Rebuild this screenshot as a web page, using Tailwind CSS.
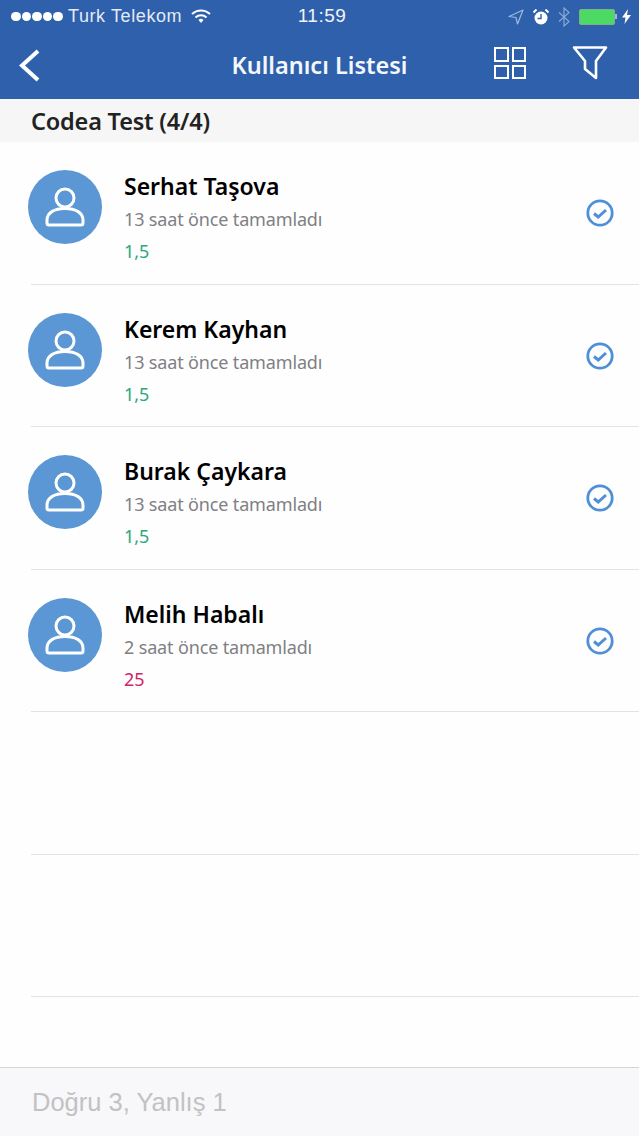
<!DOCTYPE html>
<html>
<head>
    <title>Kullanıcı Listesi</title>
    <script src="https://cdn.jsdelivr.net/npm/@tailwindcss/browser@4"></script>
</head>
<body class="bg-white">
<div class="w-[639px] h-[1136px] flex flex-col overflow-hidden font-['Noto_Sans',sans-serif]">
    <!-- status bar + nav -->
    <header class="h-[99px] bg-[#2f60ab] text-white shrink-0 flex flex-col">
        <div class="h-[33px] flex items-center justify-between pl-[11px] pr-[8px] font-['Liberation_Sans',sans-serif]">
            <div class="flex items-center w-[260px]">
                <div class="flex gap-[1px]">
                    <span class="w-[9.6px] h-[9.6px] rounded-full bg-white"></span>
                    <span class="w-[9.6px] h-[9.6px] rounded-full bg-white"></span>
                    <span class="w-[9.6px] h-[9.6px] rounded-full bg-white"></span>
                    <span class="w-[9.6px] h-[9.6px] rounded-full bg-white"></span>
                    <span class="w-[9.6px] h-[9.6px] rounded-full bg-white"></span>
                </div>
                <span class="ml-[5px] text-[18px] tracking-[0.6px] text-[#e4ebf5]">Turk Telekom</span>
                <svg class="ml-[9px]" width="20" height="15" viewBox="0 0 20 15" fill="none" stroke="white" stroke-width="2">
                    <path d="M1 5 A13 13 0 0 1 19 5"/>
                    <path d="M4.5 8.5 A8 8 0 0 1 15.5 8.5"/>
                    <path d="M10 14 L7.5 11 A3.6 3.6 0 0 1 12.5 11 Z" fill="white" stroke="none"/>
                </svg>
            </div>
            <span class="text-[19px] tracking-[0.5px] text-[#f1f4f9] ml-[2px]">11:59</span>
            <div class="flex items-center w-[260px] justify-end">
                <svg width="16" height="16" viewBox="0 0 16 16" fill="none" stroke="#9fb8dd" stroke-width="1.2" stroke-linejoin="round"><path d="M15 1 L1 7.5 L8 8.5 L9.5 15 Z"/></svg>
                <svg class="ml-[9px]" width="16" height="16" viewBox="0 0 16 16"><circle cx="8" cy="9" r="6.5" fill="white"/><path d="M8 5 V9.5 H4.5" fill="none" stroke="#2f60ab" stroke-width="1.4"/><path d="M0.5 3.5 L3.5 0.5 M15.5 3.5 L12.5 0.5" stroke="white" stroke-width="2"/></svg>
                <svg class="ml-[9px]" width="12" height="20" viewBox="0 0 12 20" fill="none" stroke="#8aa8d4" stroke-width="1.2"><path d="M1 5.5 L11 14.5 L6 19 V1 L11 5.5 L1 14.5"/></svg>
                <div class="ml-[9px] w-[36px] h-[16px] rounded-[2px] bg-[#4cd964] border border-[#7fae8f]"></div>
                <div class="w-[2px] h-[5px] bg-[#9fb8dd]"></div>
                <svg class="ml-[5px]" width="9" height="15" viewBox="0 0 9 15"><path d="M6 0 L0 8.5 H3.5 L2.5 15 L9 6 H5 Z" fill="white"/></svg>
            </div>
        </div>
        <div class="flex-1 relative flex items-center justify-center">
            <svg class="absolute left-[18px] top-[16px]" width="22" height="34" viewBox="0 0 22 34" fill="none" stroke="white" stroke-width="4"><path d="M20 2 L4 16.5 L20 31"/></svg>
            <span class="text-[23.5px] leading-none font-semibold text-[#f4f7fb] -mt-[1px]">Kullanıcı Listesi</span>
            <div class="absolute left-[494px] top-[14px] w-[32px] h-[32px] grid grid-cols-2 gap-[3px]">
                <span class="border-[2.5px] border-white"></span>
                <span class="border-[2.5px] border-white"></span>
                <span class="border-[2.5px] border-white"></span>
                <span class="border-[2.5px] border-white"></span>
            </div>
            <svg class="absolute left-[572px] top-[12px]" width="36" height="36" viewBox="0 0 36 36" fill="none" stroke="white" stroke-width="2.6" stroke-linejoin="round"><path d="M2 2.5 H34 L24 16 V33 L13 24 V16 Z"/></svg>
        </div>
    </header>

    <!-- section title -->
    <div class="h-[43px] bg-[#f6f6f6] shrink-0 flex items-center pl-[31px] pt-[2px]">
        <span class="text-[23.5px] font-semibold text-[#222] tracking-[-0.2px]">Codea Test (4/4)</span>
    </div>

    <!-- list -->
    <main class="flex-1 overflow-hidden bg-[#fefefe]">
        <div class="h-[142.5px] relative flex items-start pt-[28px] pl-[28px] pr-[25px]">
            <div class="w-[74px] h-[74px] rounded-full bg-[#5b97d5] flex items-center justify-center shrink-0">
                <svg width="40" height="40" viewBox="0 0 40 40" fill="none" stroke="white" stroke-width="3"><circle cx="20" cy="11" r="9"/><path d="M2 36 V33 C2 26 9 21.5 20 21.5 C31 21.5 38 26 38 33 V36 Q38 38 36 38 H4 Q2 38 2 36 Z"/></svg>
            </div>
            <div class="ml-[22px] flex-1 mt-[1px]">
                <div class="text-[23px] leading-[30px] font-semibold text-black">Serhat Taşova</div>
                <div class="mt-[5px] text-[18px] leading-[26px] text-[#807f84] tracking-[-0.15px]">13 saat önce tamamladı</div>
                <div class="mt-[6px] text-[18px] leading-[26px] text-[#2ca77c]">1,5</div>
            </div>
            <svg class="mt-[29px]" width="28" height="28" viewBox="0 0 28 28" fill="none" stroke="#4f8fd6" stroke-width="2.8"><circle cx="14" cy="14" r="12.2"/><path d="M8 14.5 L12.2 18 L20 11" stroke-width="3"/></svg>
            <div class="absolute left-[31px] right-0 bottom-0 h-px bg-[#e3e3e3]"></div>
        </div>
        <div class="h-[142.5px] relative flex items-start pt-[28px] pl-[28px] pr-[25px]">
            <div class="w-[74px] h-[74px] rounded-full bg-[#5b97d5] flex items-center justify-center shrink-0">
                <svg width="40" height="40" viewBox="0 0 40 40" fill="none" stroke="white" stroke-width="3"><circle cx="20" cy="11" r="9"/><path d="M2 36 V33 C2 26 9 21.5 20 21.5 C31 21.5 38 26 38 33 V36 Q38 38 36 38 H4 Q2 38 2 36 Z"/></svg>
            </div>
            <div class="ml-[22px] flex-1 mt-[1px]">
                <div class="text-[23px] leading-[30px] font-semibold text-black">Kerem Kayhan</div>
                <div class="mt-[5px] text-[18px] leading-[26px] text-[#807f84] tracking-[-0.15px]">13 saat önce tamamladı</div>
                <div class="mt-[6px] text-[18px] leading-[26px] text-[#2ca77c]">1,5</div>
            </div>
            <svg class="mt-[29px]" width="28" height="28" viewBox="0 0 28 28" fill="none" stroke="#4f8fd6" stroke-width="2.8"><circle cx="14" cy="14" r="12.2"/><path d="M8 14.5 L12.2 18 L20 11" stroke-width="3"/></svg>
            <div class="absolute left-[31px] right-0 bottom-0 h-px bg-[#e3e3e3]"></div>
        </div>
        <div class="h-[142.5px] relative flex items-start pt-[28px] pl-[28px] pr-[25px]">
            <div class="w-[74px] h-[74px] rounded-full bg-[#5b97d5] flex items-center justify-center shrink-0">
                <svg width="40" height="40" viewBox="0 0 40 40" fill="none" stroke="white" stroke-width="3"><circle cx="20" cy="11" r="9"/><path d="M2 36 V33 C2 26 9 21.5 20 21.5 C31 21.5 38 26 38 33 V36 Q38 38 36 38 H4 Q2 38 2 36 Z"/></svg>
            </div>
            <div class="ml-[22px] flex-1 mt-[1px]">
                <div class="text-[23px] leading-[30px] font-semibold text-black">Burak Çaykara</div>
                <div class="mt-[5px] text-[18px] leading-[26px] text-[#807f84] tracking-[-0.15px]">13 saat önce tamamladı</div>
                <div class="mt-[6px] text-[18px] leading-[26px] text-[#2ca77c]">1,5</div>
            </div>
            <svg class="mt-[29px]" width="28" height="28" viewBox="0 0 28 28" fill="none" stroke="#4f8fd6" stroke-width="2.8"><circle cx="14" cy="14" r="12.2"/><path d="M8 14.5 L12.2 18 L20 11" stroke-width="3"/></svg>
            <div class="absolute left-[31px] right-0 bottom-0 h-px bg-[#e3e3e3]"></div>
        </div>
        <div class="h-[142.5px] relative flex items-start pt-[28px] pl-[28px] pr-[25px]">
            <div class="w-[74px] h-[74px] rounded-full bg-[#5b97d5] flex items-center justify-center shrink-0">
                <svg width="40" height="40" viewBox="0 0 40 40" fill="none" stroke="white" stroke-width="3"><circle cx="20" cy="11" r="9"/><path d="M2 36 V33 C2 26 9 21.5 20 21.5 C31 21.5 38 26 38 33 V36 Q38 38 36 38 H4 Q2 38 2 36 Z"/></svg>
            </div>
            <div class="ml-[22px] flex-1 mt-[1px]">
                <div class="text-[23px] leading-[30px] font-semibold text-black">Melih Habalı</div>
                <div class="mt-[5px] text-[18px] leading-[26px] text-[#807f84] tracking-[-0.15px]">2 saat önce tamamladı</div>
                <div class="mt-[6px] text-[18px] leading-[26px] text-[#d0246a]">25</div>
            </div>
            <svg class="mt-[29px]" width="28" height="28" viewBox="0 0 28 28" fill="none" stroke="#4f8fd6" stroke-width="2.8"><circle cx="14" cy="14" r="12.2"/><path d="M8 14.5 L12.2 18 L20 11" stroke-width="3"/></svg>
            <div class="absolute left-[31px] right-0 bottom-0 h-px bg-[#e6dfe8]"></div>
        </div>
        <div class="h-[142.5px] relative"><div class="absolute left-[31px] right-0 bottom-0 h-px bg-[#e3e3e3]"></div></div>
        <div class="h-[142.5px] relative"><div class="absolute left-[31px] right-0 bottom-0 h-px bg-[#e3e3e3]"></div></div>
    </main>

    <!-- footer -->
    <footer class="h-[69px] shrink-0 bg-[#f8f7f9] border-t border-[#d4d3d6] flex items-center pl-[32px]">
        <span class="text-[25.5px] text-[#c2c1c4] font-['Liberation_Sans',sans-serif]">Doğru 3, Yanlış 1</span>
    </footer>
</div>
</body>
</html>
